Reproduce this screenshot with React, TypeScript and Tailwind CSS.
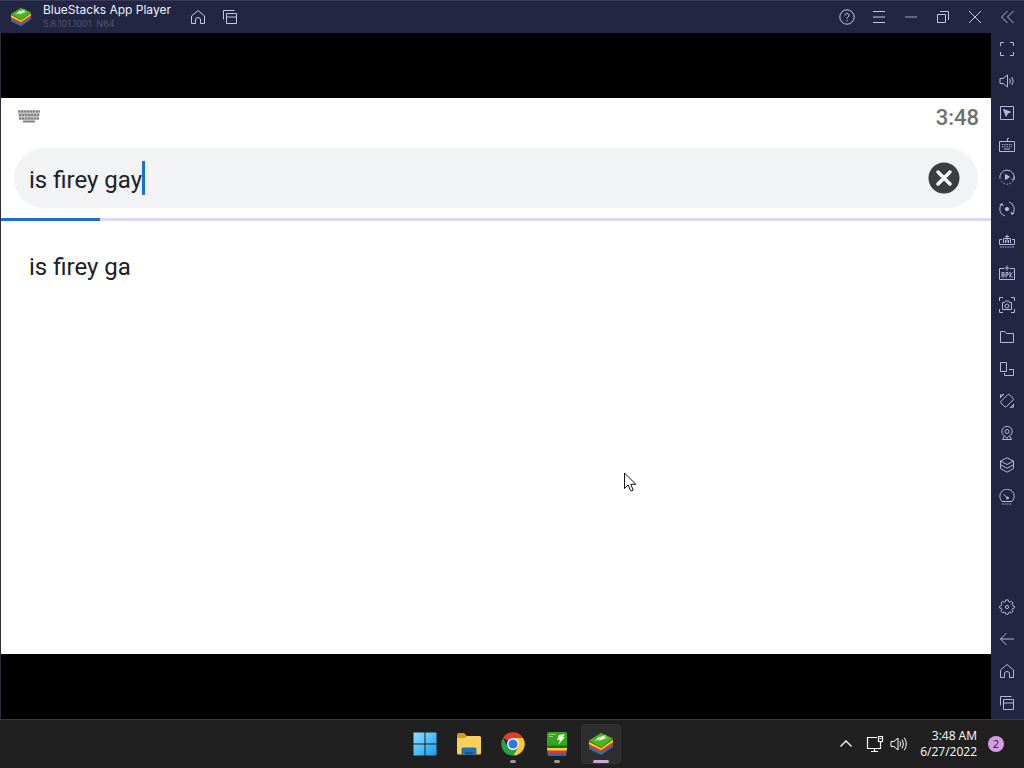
import { useState } from 'react';
import type { ReactNode } from 'react';

type Tool = { label: string; icon: ReactNode };

const Icon = ({ children }: { children: ReactNode }) => (
  <svg width="16" height="16" viewBox="0 0 16 16" fill="none" stroke="currentColor" strokeWidth="1" aria-hidden="true">
    {children}
  </svg>
);

const HomeIcon = () => (
  <Icon>
    <path d="M1.5 7 8 1.5 14.5 7v7.5h-4V11a2.5 2.5 0 0 0-5 0v3.5h-4z" />
  </Icon>
);

const RecentsIcon = () => (
  <Icon>
    <path d="M1.5 10.5v-9h11M4.5 4.5h10v10h-10zM4.5 8h10" />
  </Icon>
);

const sideTools: Tool[] = [
  {
    label: 'Full screen',
    icon: <Icon><path d="M1.5 5V1.5H5M11 1.5h3.5V5M14.5 11v3.5H11M5 14.5H1.5V11" /></Icon>,
  },
  {
    label: 'Volume',
    icon: (
      <Icon>
        <path d="M1 5.5h3L8.5 2v12L4 10.5H1zM10.5 5.5q1.8 2.5 0 5M12.8 4q2.8 4 0 8" />
      </Icon>
    ),
  },
  {
    label: 'Lock cursor',
    icon: (
      <Icon>
        <path d="M1.5 1.5h13v13h-13z" />
        <path d="m4.5 4.5 7 2.5-3 1.3-1.3 3z" fill="currentColor" />
      </Icon>
    ),
  },
  {
    label: 'Game controls',
    icon: (
      <Icon>
        <path d="M.5 4.500h15v10H.5zM8.5 4.500v-3H10M5 12h6" />
        <path d="M3 7.500h10M3 9.700h10" strokeDasharray="1.3 1" />
      </Icon>
    ),
  },
  {
    label: 'Macro recorder',
    icon: (
      <Icon>
        <path d="M1 10A7.2 7.2 0 1 1 15 10M15.5 7.500 14.8 11l-2.5-1" />
        <path d="M14 12a7.2 7.2 0 0 1-12.500-1" strokeDasharray="1.5 1.5" />
        <path d="m6.5 5.500 4 2.500-4 2.500z" fill="currentColor" />
      </Icon>
    ),
  },
  {
    label: 'Sync operations',
    icon: (
      <Icon>
        <path d="M6 15A7.2 7.2 0 0 1 3 2.800M.800 3.800 3.200 2.600 4 5.200M10 1a7.2 7.2 0 0 1 3 12.200M15.200 12.200l-2.400 1.200-.8-2.600" />
        <circle cx="8" cy="8" r="1.7" fill="currentColor" />
      </Icon>
    ),
  },
  {
    label: 'Multi-instance manager',
    icon: (
      <Icon>
        <path d="M3 6.500H.5v5h15v-5H13M4.500 10V5.500h7V10M6.500 7v3M9.500 7v3M8 1.500v8M6 3.500h4" />
        <path d="M1 14h14" strokeDasharray="1.5 1" />
      </Icon>
    ),
  },
  {
    label: 'Install APK',
    icon: (
      <Icon>
        <path d="M5 3.500H.5v11h15v-11H11M8 .5v5M5.500 3h5" />
        <path d="M3 12.500v-5h2v5M3 10h2M7 12.500v-5h2V10H7M11 7v5.500M13.500 7.500 11.200 10l2.300 2.500" />
      </Icon>
    ),
  },
  {
    label: 'Screenshot',
    icon: (
      <Icon>
        <path d="M.5 4V.5H4M12 .5h3.500V4M15.500 12v3.500H12M4 15.500H.5V12M3.500 5.500h2l1-1.500h3l1 1.500h2v7h-9z" />
        <circle cx="8" cy="9" r="2" />
      </Icon>
    ),
  },
  { label: 'Media manager', icon: <Icon><path d="M1.5 2.500H6l1.500 2h7v9h-13z" /></Icon> },
  { label: 'Rotate', icon: <Icon><path d="M1.5 1.500h6v9h-6zM10 8.500h4.500v6h-9V12" /></Icon> },
  {
    label: 'Shake',
    icon: (
      <Icon>
        <path d="m1.8 8.500 7-7h1.400l4 4v1.400l-7 7H5.800l-4-4zM1.500 5V1.800H4M2 4l3-3M14.500 11v3.200H12M11 15l4-4" />
      </Icon>
    ),
  },
  {
    label: 'Set location',
    icon: (
      <Icon>
        <path d="M6.500 11.500a5.200 5.200 0 1 1 3 0L8 13.500zM5 11.500l-1.500 3h9l-1.500-3" />
        <circle cx="8" cy="6.500" r="2" />
      </Icon>
    ),
  },
  {
    label: 'Layers',
    icon: <Icon><path d="m8 .8 6.500 3.300L8 7.500 1.500 4.100zM1.500 4.100v7.500L8 15.200l6.500-3.600V4.100M1.500 7.800 8 11.300l6.500-3.500" /></Icon>,
  },
  {
    label: 'Performance',
    icon: (
      <Icon>
        <path d="M3 12.500a7.200 7.200 0 1 1 10 0zM4.500 5.500 8 8.500" />
        <circle cx="8.500" cy="9" r="1" fill="currentColor" />
        <path d="M3 15h10" strokeDasharray="1.5 1" />
      </Icon>
    ),
  },
];

const navTools: Tool[] = [
  {
    label: 'Settings',
    icon: (
      <Icon>
        <path d="M6.800.9h2.400l.5 1.800 1 .5 1.700-.9 1.600 1.600-.9 1.700.5 1 1.700.5v2l-1.700.5-.5 1 .9 1.700-1.600 1.600-1.700-.9-1 .5-.5 1.700H6.800l-.5-1.700-1-.5-1.700.9L2 12.300l.9-1.700-.5-1-1.700-.5v-2l1.700-.5.5-1L2 3.900l1.600-1.600 1.700.9 1-.5z" />
        <circle cx="8" cy="8" r="1.6" />
      </Icon>
    ),
  },
  { label: 'Back', icon: <Icon><path d="M15 8H1.500M7.500 2l-6 6 6 6" /></Icon> },
  { label: 'Home', icon: <HomeIcon /> },
  { label: 'Recent apps', icon: <RecentsIcon /> },
];

const windowTools: Tool[] = [
  {
    label: 'Help',
    icon: (
      <Icon>
        <circle cx="8" cy="8" r="7.2" />
        <path d="M6 6.500a2 2 0 1 1 3 1.600q-1 .6-1 1.600M8 11v1.300" />
      </Icon>
    ),
  },
  { label: 'Menu', icon: <Icon><path d="M2 2.500h12M2 8h12M2 13.500h12" /></Icon> },
  { label: 'Minimize', icon: <Icon><path d="M2 8h12" strokeOpacity=".8" /></Icon> },
  { label: 'Restore', icon: <Icon><path d="M2.500 5.500h8v8h-8zM5 2.500h8.500V11" /></Icon> },
  { label: 'Close', icon: <Icon><path d="m2 2 12 12M14 2 2 14" /></Icon> },
];

const StacksLogo = ({ className }: { className: string }) => (
  <svg viewBox="0 0 26 24" className={className} aria-hidden="true">
    <path d="M1 14v3l12 6 12-8v-3L13 19z" fill="#1f72b8" />
    <path d="M1 11v3.500l12 6 12-8V9L13 17z" fill="#e5352b" />
    <path d="M1 8.500V12l12 6 12-8V7L13 14z" fill="#fbd32b" />
    <path d="M1 8.500 13 1l12 5.500L13 15z" fill="#4cb526" />
    <path d="m1 8.500 12 6.500L25 6.500v1.200L13 16.200 1 9.700z" fill="#1d7a22" />
    <path d="m7 9 3-3.500 8.500-2.500-2.500 2.300 3.500.5-9 3.200 1.500-2z" fill="#e8f8dc" />
  </svg>
);

const ToolButton = ({ label, icon }: Tool) => (
  <button type="button" aria-label={label} className="flex h-8 w-8 shrink-0 items-center justify-center hover:bg-white/10">
    {icon}
  </button>
);

const TitleBar = () => (
  <header className="flex h-[33px] shrink-0 items-center border-t border-[#363a58] bg-[#232642] text-[#c3c7e6]">
    <StacksLogo className="ml-2.5 h-5 w-[22px]" />
    <div className="ml-[11px] w-[139px] font-[Inter,sans-serif] whitespace-nowrap">
      <h1 className="text-[12px] leading-[14px] text-[#f1f2fa]">BlueStacks App Player</h1>
      <p className="text-[9px] leading-[14px] text-[#50536f]">5.8.101.1001&nbsp; N64</p>
    </div>
    <nav className="flex">
      <ToolButton label="Home" icon={<HomeIcon />} />
      <ToolButton label="Recent apps" icon={<RecentsIcon />} />
    </nav>
    <div className="ml-auto flex">
      {windowTools.map((tool) => <ToolButton key={tool.label} {...tool} />)}
    </div>
  </header>
);

const SideBar = () => (
  <aside className="flex w-[33px] shrink-0 flex-col items-start border-t border-[#363a58] bg-[#232642] text-[#b4b9dd]">
    <ToolButton label="Collapse" icon={<Icon><path d="m8.500 2-6 6 6 6M14.500 2l-6 6 6 6" /></Icon>} />
    {sideTools.map((tool) => <ToolButton key={tool.label} {...tool} />)}
    <div className="mt-auto flex flex-col">
      {navTools.map((tool) => <ToolButton key={tool.label} {...tool} />)}
    </div>
  </aside>
);

const SearchScreen = () => {
  const [query, setQuery] = useState('is firey gay');

  return (
    <main className="flex-1 bg-white font-[Roboto,sans-serif] text-[#202124]">
      <div className="flex h-[38px] items-center justify-between pr-3 pl-[17px]">
        <svg width="22" height="14" viewBox="0 0 22 14" aria-hidden="true">
          <path d="M0 0h22l-1 10H1z" fill="#c4c4c4" />
          <path d="M0 1.500h22M1 5h20M1 8.500h20" stroke="#808080" strokeWidth="2" strokeDasharray="2.2 .8" />
          <path d="M5 11.500h12" stroke="#808080" strokeWidth="2" />
        </svg>
        <time className="pt-0.5 text-[22px] leading-6 font-medium text-[#707070]">3:48</time>
      </div>
      <form className="mx-[13px] mt-3 flex h-[60px] items-center rounded-full bg-[#f1f3f4] pr-[18px] pl-[15px]" onSubmit={(e) => e.preventDefault()}>
        <label className="flex flex-1 items-center">
          <input
            type="text"
            aria-label="Search"
            value={query}
            onChange={(e) => setQuery(e.target.value)}
            className="field-sizing-content bg-transparent pt-1 text-2xl leading-8 caret-transparent outline-none"
          />
          <span className="h-[34px] w-[3px] bg-[#1a6fd8]" />
        </label>
        <button type="button" aria-label="Clear search" onClick={() => setQuery('')}>
          <svg width="32" height="32" viewBox="0 0 32 32" aria-hidden="true">
            <circle cx="16" cy="16" r="15.5" fill="#3c3d40" />
            <path d="m10 10 12 12M22 10 10 22" stroke="#fff" strokeWidth="3.5" strokeLinecap="round" />
          </svg>
        </button>
      </form>
      <div className="mt-2.5 h-[3px] bg-[#d6dcf7]">
        <div className="h-full w-1/10 bg-[#1a6fd0]" />
      </div>
      <ul>
        <li>
          <button type="button" className="mt-7 px-7 text-left text-2xl leading-9">is firey ga</button>
        </li>
      </ul>
    </main>
  );
};

const WindowsLogo = () => (
  <svg width="24" height="24" viewBox="0 0 24 24" aria-hidden="true">
    <defs>
      <linearGradient id="win" x1="0" y1="0" x2="24" y2="24" gradientUnits="userSpaceOnUse">
        <stop stopColor="#8fe3ff" />
        <stop offset="1" stopColor="#159bef" />
      </linearGradient>
    </defs>
    <path d="M.5.5h11v11H.5zM12.500.5h11v11h-11zM.5 12.500h11v11H.5zM12.500 12.500h11v11h-11z" fill="url(#win)" />
  </svg>
);

const FolderLogo = () => (
  <svg width="26" height="24" viewBox="0 0 26 24" aria-hidden="true">
    <path d="M1 3q0-2 2-2h5l3 3h12q2 0 2 2v8H1z" fill="#d9991c" />
    <path d="M1 6h8l2-2h12q2 0 2 2v15q0 1.500-1.500 1.500h-21Q1 22.500 1 21z" fill="#fbd058" />
    <path d="M5.500 22.500V17q0-1.500 1.500-1.500h12q1.500 0 1.500 1.500v5.500z" fill="#1c73b8" />
    <path d="M9 22.500V20h8v2.500z" fill="#10558f" />
  </svg>
);

const ChromeLogo = () => (
  <svg width="24" height="24" viewBox="0 0 24 24" aria-hidden="true">
    <path d="M12 12 2 6a11.500 11.500 0 0 1 20 0z" fill="#e33b2e" />
    <path d="M12 6h10a11.500 11.500 0 0 1-10 17.500l5.200-8.500z" fill="#fcc934" />
    <path d="M2 6a11.500 11.500 0 0 0 10 17.500l5.200-8.500L12 12 6.800 15z" fill="#25a04b" />
    <circle cx="12" cy="12" r="6" fill="#fff" />
    <circle cx="12" cy="12" r="4.6" fill="#3079e8" />
  </svg>
);

const MultiInstanceLogo = () => (
  <svg width="22" height="26" viewBox="0 0 22 26" aria-hidden="true">
    <rect x="1.5" y="17" width="19" height="8" rx="1.5" fill="#1f72b8" />
    <rect x="1.5" y="16" width="19" height="6.5" rx="1.5" fill="#e5352b" />
    <rect x="1" y="14" width="20" height="5.5" rx="1.5" fill="#f7cf47" />
    <rect x="1" y="1" width="20" height="16" rx="1.5" fill="#35a51e" />
    <path d="M1 14.500h20V16q0 1-1 1H2q-1 0-1-1z" fill="#15751b" />
    <path d="M3 3.500h7M3 5.500h4" stroke="#91d56c" />
    <path d="m13 4 6-1-2 3h2l-7 8 2-5h-3z" fill="#eaffdd" />
  </svg>
);

const apps = [
  { label: 'Start', icon: <WindowsLogo />, running: false, active: false },
  { label: 'File Explorer', icon: <FolderLogo />, running: false, active: false },
  { label: 'Google Chrome', icon: <ChromeLogo />, running: true, active: false },
  { label: 'Multi-Instance Manager', icon: <MultiInstanceLogo />, running: true, active: false },
  { label: 'BlueStacks', icon: <StacksLogo className="h-6 w-[26px]" />, running: true, active: true },
];

const TaskBar = () => (
  <footer className="grid h-[49px] shrink-0 grid-cols-[1fr_auto_1fr] items-center border-t border-[#3a3a3a] bg-[#202020] pl-0.5 text-white">
    <nav className="col-start-2 flex gap-1">
      {apps.map(({ label, icon, running, active }) => (
        <button
          key={label}
          type="button"
          aria-label={label}
          className={`relative flex h-10 w-10 items-center justify-center rounded ${active ? 'border border-[#343434] bg-[#2e2e2e]' : ''}`}
        >
          {icon}
          {running && (
            <span className={`absolute h-[3px] rounded-full ${active ? 'bottom-0 w-4 bg-[#cfa3dc]' : 'bottom-px w-1.5 bg-[#9a9a9a]'}`} />
          )}
        </button>
      ))}
    </nav>
    <div className="flex items-center justify-end pr-5">
      <button type="button" aria-label="Show hidden icons" className="mr-3">
        <Icon><path d="M2.500 10.500 8 5l5.500 5.500" strokeWidth="1.3" /></Icon>
      </button>
      <button type="button" aria-label="Network and volume" className="mr-3 flex gap-1.5">
        <svg width="18" height="18" viewBox="0 0 18 18" fill="none" stroke="currentColor" aria-hidden="true">
          <path d="M11 2.500H1.500v11h13V9M5 16.500h7M8.500 13.500v3M12.500 1.500h4v5h-4zM14.500 6.500v4M13.500 3.500h2" strokeWidth="1.2" />
        </svg>
        <svg width="18" height="18" viewBox="0 0 18 18" fill="none" stroke="currentColor" aria-hidden="true">
          <path d="M1 6.500h3L8 3v12l-4-3.500H1zM10 6.500q1.500 2.500 0 5M12 4.500q3 4.500 0 9M14.300 2.800q4 6.200 0 12.400" />
        </svg>
      </button>
      <time className="text-right font-['Open_Sans',sans-serif] text-[12px] leading-4">
        3:48 AM
        <br />
        6/27/2022
      </time>
      <span className="ml-[11px] flex size-4 items-center justify-center rounded-full bg-[#d69be6] font-['Open_Sans',sans-serif] text-[11px] leading-4 text-[#202020]">
        2
      </span>
    </div>
  </footer>
);

const App = () => (
  <div className="relative flex h-screen flex-col overflow-hidden bg-black">
    <div className="flex min-h-0 flex-1">
      <div className="flex min-w-0 flex-1 flex-col">
        <TitleBar />
        <div className="flex flex-1 flex-col border-l border-[#2c2d36] bg-black py-[65px]">
          <SearchScreen />
        </div>
      </div>
      <SideBar />
    </div>
    <TaskBar />
    {/* Mouse pointer */}
    <svg width="14" height="21" viewBox="0 0 14 21" className="pointer-events-none absolute top-[472px] left-[624px]" aria-hidden="true">
      <path d="M.5 1v15.500l3.700-3.500 2.300 5.500q1.300 1 2.700-.5L6.800 12.300h5z" fill="#fff" stroke="#111" />
    </svg>
  </div>
);

export default App;
